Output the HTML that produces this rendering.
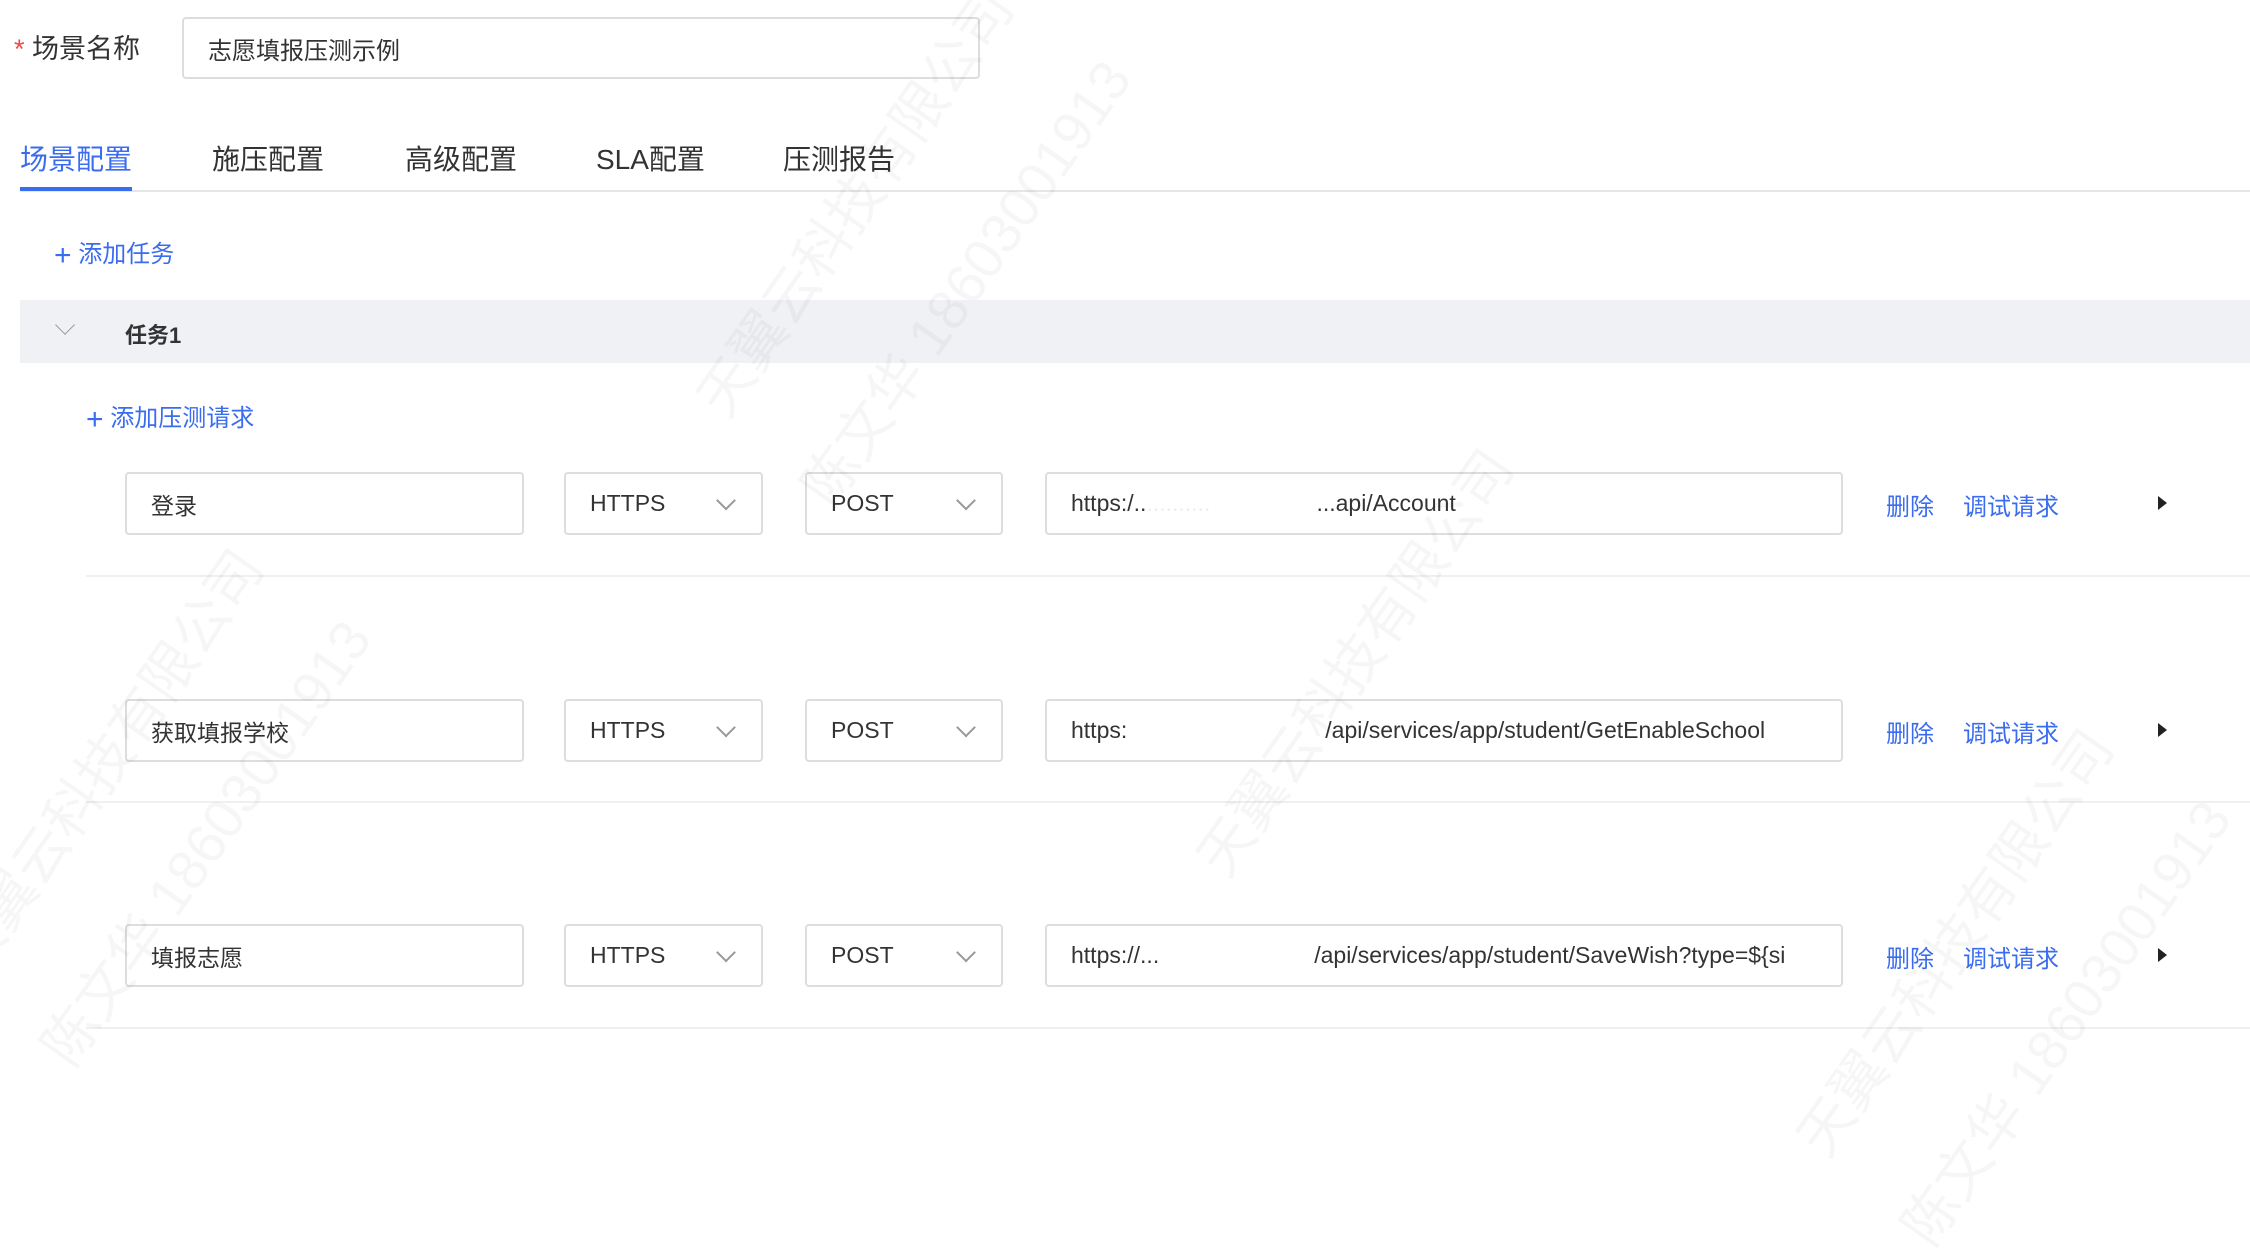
<!DOCTYPE html>
<html><head><meta charset="utf-8"><style>
*{box-sizing:border-box;margin:0;padding:0}
body{width:2250px;height:1078px;background:#fff;position:relative;overflow:hidden;font-family:"Liberation Sans","Noto Sans CJK SC",sans-serif;color:#333;font-size:23px}
.a{position:absolute;white-space:nowrap}
.box{position:absolute;border:2px solid #ddd;border-radius:4px;background:#fff;display:flex;align-items:center;padding-left:24px;font-size:23px;color:#333}
.chev{position:absolute;right:28px;top:50%;width:14px;height:14px;border-right:2px solid #999;border-bottom:2px solid #999;transform:translateY(-75%) rotate(45deg)}
.blue{color:#3a6cf0}
.sep{position:absolute;left:86px;right:0;height:2px;background:#eef0f3}
.wm{position:absolute;color:rgba(0,0,0,0.035);font-size:56px;transform:rotate(-55deg);white-space:nowrap}
.tab{position:absolute;top:138px;font-size:28px;white-space:nowrap}
</style></head><body>
<div class="a" style="left:14px;top:27px;font-size:27px"><span style="color:#f04848">*</span> 场景名称</div>
<div class="box" style="left:182px;top:17px;width:798px;height:62px;font-size:24px">志愿填报压测示例</div>

<div class="tab blue" style="left:20px">场景配置</div>
<div class="tab" style="left:212px">施压配置</div>
<div class="tab" style="left:405px">高级配置</div>
<div class="tab" style="left:596px">SLA配置</div>
<div class="tab" style="left:783px">压测报告</div>
<div class="a" style="left:20px;top:190px;width:2230px;height:2px;background:#e4e6ea"></div>
<div class="a" style="left:20px;top:187px;width:112px;height:4px;background:#3a6cf0"></div>

<div class="a blue" style="left:54px;top:234px;font-size:24px"><span style="font-size:30px;font-weight:300;vertical-align:-3px">+</span> 添加任务</div>

<div class="a" style="left:20px;top:300px;width:2230px;height:63px;background:#eff1f5"></div>
<div class="a" style="left:58px;top:318px;width:14px;height:14px;border-right:1.5px solid #999;border-bottom:1.5px solid #999;transform:rotate(45deg)"></div>
<div class="a" style="left:125px;top:318px;font-weight:bold;font-size:22px">任务1</div>

<div class="a blue" style="left:86px;top:398px;font-size:24px"><span style="font-size:30px;font-weight:300;vertical-align:-3px">+</span> 添加压测请求</div>

<!-- row 1 -->
<div class="box" style="left:125px;top:472px;width:399px;height:63px">登录</div>
<div class="box" style="left:564px;top:472px;width:199px;height:63px">HTTPS<span class="chev"></span></div>
<div class="box" style="left:805px;top:472px;width:198px;height:63px">POST<span class="chev"></span></div>
<div class="box" style="left:1045px;top:472px;width:798px;height:63px">https:/.. <span style="display:inline-block;width:170px;color:#eee">..........</span>...api/Account</div>
<div class="a blue" style="left:1886px;top:487px;font-size:24px">删除</div>
<div class="a blue" style="left:1963px;top:487px;font-size:24px">调试请求</div>
<div class="a" style="left:2158px;top:496px;border-left:9px solid #222;border-top:7px solid transparent;border-bottom:7px solid transparent"></div>
<div class="sep" style="top:575px"></div>

<!-- row 2 -->
<div class="box" style="left:125px;top:699px;width:399px;height:63px">获取填报学校</div>
<div class="box" style="left:564px;top:699px;width:199px;height:63px">HTTPS<span class="chev"></span></div>
<div class="box" style="left:805px;top:699px;width:198px;height:63px">POST<span class="chev"></span></div>
<div class="box" style="left:1045px;top:699px;width:798px;height:63px">https:<span style="display:inline-block;width:198px"></span>/api/services/app/student/GetEnableSchool</div>
<div class="a blue" style="left:1886px;top:714px;font-size:24px">删除</div>
<div class="a blue" style="left:1963px;top:714px;font-size:24px">调试请求</div>
<div class="a" style="left:2158px;top:723px;border-left:9px solid #222;border-top:7px solid transparent;border-bottom:7px solid transparent"></div>
<div class="sep" style="top:801px"></div>

<!-- row 3 -->
<div class="box" style="left:125px;top:924px;width:399px;height:63px">填报志愿</div>
<div class="box" style="left:564px;top:924px;width:199px;height:63px">HTTPS<span class="chev"></span></div>
<div class="box" style="left:805px;top:924px;width:198px;height:63px">POST<span class="chev"></span></div>
<div class="box" style="left:1045px;top:924px;width:798px;height:63px;overflow:hidden">https://...<span style="display:inline-block;width:155px"></span>/api/services/app/student/SaveWish?type=${si</div>
<div class="a blue" style="left:1886px;top:939px;font-size:24px">删除</div>
<div class="a blue" style="left:1963px;top:939px;font-size:24px">调试请求</div>
<div class="a" style="left:2158px;top:948px;border-left:9px solid #222;border-top:7px solid transparent;border-bottom:7px solid transparent"></div>
<div class="sep" style="top:1027px"></div>

<div class="wm" style="left:600px;top:160px">天翼云科技有限公司</div>
<div class="wm" style="left:700px;top:240px">陈文华 18603001913</div>
<div class="wm" style="left:-150px;top:720px">天翼云科技有限公司</div>
<div class="wm" style="left:-60px;top:800px">陈文华 18603001913</div>
<div class="wm" style="left:1100px;top:620px">天翼云科技有限公司</div>
<div class="wm" style="left:1700px;top:900px">天翼云科技有限公司</div>
<div class="wm" style="left:1800px;top:980px">陈文华 18603001913</div>
</body></html>
